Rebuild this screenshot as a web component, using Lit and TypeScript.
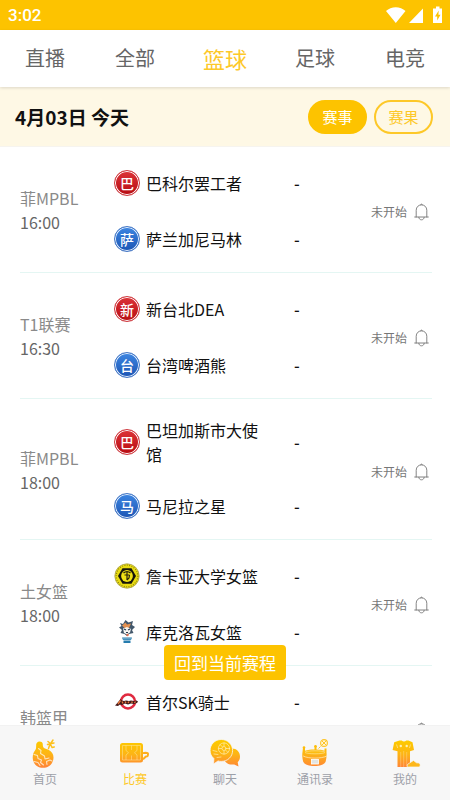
import { LitElement, html, svg, css, nothing } from "lit";
import { customElement, property, state } from "lit/decorators.js";
import { classMap } from "lit/directives/class-map.js";

type Badge = "red" | "blue" | "zhang" | "wolf" | "knights";

interface Team {
  name: string;
  badge: Badge;
}

interface Match {
  league: string;
  time?: string;
  home: Team;
  away?: Team;
}

const matches: Match[] = [
  { league: "菲MPBL", time: "16:00", home: { name: "巴科尔罢工者", badge: "red" }, away: { name: "萨兰加尼马林", badge: "blue" } },
  { league: "T1联赛", time: "16:30", home: { name: "新台北DEA", badge: "red" }, away: { name: "台湾啤酒熊", badge: "blue" } },
  { league: "菲MPBL", time: "18:00", home: { name: "巴坦加斯市大使馆", badge: "red" }, away: { name: "马尼拉之星", badge: "blue" } },
  { league: "土女篮", time: "18:00", home: { name: "詹卡亚大学女篮", badge: "zhang" }, away: { name: "库克洛瓦女篮", badge: "wolf" } },
  { league: "韩篮甲", home: { name: "首尔SK骑士", badge: "knights" } },
];

const gradient = (id: string) => svg`
  <linearGradient id=${id} x1="0" y1="0" x2="0" y2="30" gradientUnits="userSpaceOnUse">
    <stop offset="0.1" stop-color="#fdc800"></stop>
    <stop offset="0.5" stop-color="#fdb515"></stop>
    <stop offset="0.95" stop-color="#ff8438"></stop>
  </linearGradient>`;

const homeIcon = svg`
  <path fill="url(#g)" d="M9.500 2.500a3.400 3.400 0 0 1 3.300 3.700c.1 1.600.6 2.600 2.200 3.400l3.500 1.200c3.200 1.700 5 4.300 5 7.800 0 5.900-4.600 10.200-10.500 10.200S2.700 24.500 2.700 18.600c0-3.600 1.200-5.800 2.600-7.600 1-1.300.7-2.500.9-4.500a3.500 3.500 0 0 1 3.300-4z"></path>
  <path fill="none" stroke="#fff" stroke-opacity="0.7" stroke-width="1.100" stroke-linecap="round" stroke-linejoin="round" d="M8.500 9.500l2.500 2-.5 3 4 2.500.5 3 4-1 M4 15.500l3.500 1 .5 3 3.500 1.500-1 2.500 3 2.500 M4 22.500l4 1 2 3 M17 25.500l-.5-3 3.500-1.500 2 1"></path>
  <path fill="none" stroke="#fdc01c" stroke-width="1.500" stroke-linecap="round" stroke-linejoin="round" d="M18 2.500l1.800 1.500M23 1l-2 3M17.500 5.500l3-.8 3.500-.7M20 5l-1.500 4.500M20.800 6l1.200 2.500 2.300-.5"></path>`;

const matchIcon = svg`
  <rect x="0" y="4" width="23" height="19.500" rx="2.500" fill="url(#g)"></rect>
  <path fill="none" stroke="#fdae1c" stroke-width="2" stroke-linejoin="round" d="M23 15c0-1.600 5-1.600 5 0s0 2.500-1.800 2.500c-1.200 0-1.200 2-3.200 2.500"></path>
  <g fill="none" stroke="#fff0b8" stroke-opacity="0.55" stroke-width="0.800">
    <path d="M2.500 6.500h18v14.500h-18zM11.500 6.500v4.500M11.500 16.500V21M6 6.500v5l2.500 2.200L6 16v5M17 6.500v5l-2.500 2.200L17 16v5"></path>
  </g>`;

const chatIcon = svg`
  <path fill="url(#g)" d="M22 9.500c4.500 0 8 3.500 8 8 0 2.400-.8 4.200-2.300 5.700l.8 4.300-4.300-2.100c-6.200 1-10.700-2.400-10.700-7.900z"></path>
  <path fill="url(#g)" stroke="#f7f7f7" stroke-width="0.800" d="M11.300.5c6.300 0 11.300 4.800 11.300 10.900 0 6.300-5 11-11.200 11-1.200 0-2.300-.1-3.300-.5L3.600 25l.3-5.500C1.400 17.500.1 14.800.1 11.500.1 5.300 5 .5 11.300.5z"></path>
  <g fill="none" stroke="#fff0b8" stroke-opacity="0.750" stroke-width="0.900" stroke-linecap="round">
    <circle cx="14" cy="9.500" r="5.600"></circle>
    <circle cx="14" cy="9.500" r="2"></circle>
    <path d="M14 4v3M14 12v3M8.500 9.500h3M16.500 9.500h3M10.200 5.700l2 2M17.800 13.300l-2-2M3 11.500l4 1M4 15l4 .5M7 18.500l4-.5"></path>
  </g>`;

const contactsIcon = svg`
  <path fill="url(#g)" d="M3 8.500h2v3.200c2.600-.8 5.800-1.200 9.500-1.200V7.500h2v3c3.200.1 5.800.5 8 1.200V9.500h2v4c.3 2.500 0 6.500-1 9.500-1.500 2.600-5.800 4-11 4s-9.700-1.400-11.200-4c-1-3-1.300-7-.800-10z"></path>
  <ellipse cx="15" cy="13.300" rx="10" ry="1.500" fill="#fdbd10" stroke="#fff2c4" stroke-opacity="0.700" stroke-width="0.700"></ellipse>
  <path fill="none" stroke="#fff0c0" stroke-opacity="0.800" stroke-width="0.900" d="M3.200 17c5 2.800 18.600 2.800 23.600 0"></path>
  <rect x="11.500" y="20.500" width="7" height="4.500" fill="#e2e4e2" stroke="#fff" stroke-width="0.800"></rect>
  <circle cx="24" cy="4" r="3.400" fill="#fff6d8" stroke="#fdc428" stroke-width="1.100"></circle>
  <path fill="none" stroke="#fdc428" stroke-width="1" d="M22 2l4 4M26 2l-4 4M20.500 7.500l-2 2"></path>
  <circle cx="4" cy="8.500" r="1.300" fill="#fdbd08"></circle>
  <circle cx="15.500" cy="7.200" r="1.300" fill="#fdbd08"></circle>`;

const meIcon = svg`
  <path fill="url(#g)" d="M9.500 1.500h2.200c1.200 1.300 3.400 1.300 4.600 0h2.200l4 1.700 1.500 7.800-4 1.200V28H7.500V12.200l-4.900-1.200L4.200 3.200z"></path>
  <path fill="none" stroke="#fff3d0" stroke-opacity="0.450" stroke-width="0.700" d="M10.700 13v15M13.700 12v16M16.700 13v15"></path>
  <path fill="none" stroke="#fff3d0" stroke-opacity="0.800" stroke-width="0.700" d="M6.500 5.500L7.700 9M20.500 5.500L19.500 9"></path>
  <circle cx="10.800" cy="7" r="1.200" fill="#fff0b0"></circle>
  <circle cx="16.700" cy="7" r="1.200" fill="#fff0b0"></circle>
  <path fill="#fdb71c" stroke="#f7f7f7" stroke-width="0.700" d="M18 25l5.500-3.500 3 2.300 2.500.2c1.500 1 1.500 2.500.5 4H18.500c-1.500 0-1.800-1.800-.5-3z"></path>`;

@customElement("team-badge")
export class TeamBadge extends LitElement {
  @property() kind: Badge = "red";
  @property() letter = "";

  static styles = css`
    :host { display: block; flex: none; width: 26px; height: 26px; }
    .disc {
      box-sizing: border-box; width: 26px; height: 26px; border-radius: 50%;
      display: flex; align-items: center; justify-content: center;
      font: 500 14px/20px "Noto Sans CJK SC", sans-serif; color: #fff;
    }
    .red { border: 1px solid #cf3a40; background: linear-gradient(#dc3438, #b80c12); box-shadow: inset 0 0 0 1px #fff; }
    .blue { border: 1px solid #4577c4; background: linear-gradient(#3d86e2, #1c55b4); box-shadow: inset 0 0 0 1px #e8f2ff; }
    svg { display: block; width: 26px; height: 26px; }
  `;

  render() {
    switch (this.kind) {
      case "zhang":
        return html`<svg viewBox="0 0 26 26" aria-hidden="true">
          <circle cx="13" cy="13" r="12.200" fill="#e9dc12" stroke="#a79f5a" stroke-width="0.800"></circle>
          <circle cx="13" cy="13" r="10.800" fill="none" stroke="#857c10" stroke-width="1.200" stroke-dasharray="0.900 1.500"></circle>
          <path d="M8.500 5.200h9l4.500 7.800-4.500 7.800h-9L4 13z" fill="#17150a"></path>
          <circle cx="13" cy="13" r="5.900" fill="#f0e216"></circle>
          <path d="M9.500 10c2-2 5-2 7 0M10.500 12h5M13 9v8M15.500 12l-.5 3-2 2" fill="none" stroke="#28240a" stroke-width="1.200"></path>
        </svg>`;
      case "wolf":
        return html`<svg viewBox="0 0 26 26" aria-hidden="true">
          <path d="M6 4l3 1 2.500-4 3 2.500L19 2l-1 4 3 2-3 3 1.500 3-4.500 1-2 2-2.500-2-4-1L8 11 5 8.500 7.500 7z" fill="#42576b"></path>
          <path d="M8 6.500l3.500-3 1.500 2 4-1-2 4.500-4 .5z" fill="#e39152"></path>
          <path d="M9 9.500l4-1.500 4 2-1 3.500-3 2-3-1.500z" fill="#f5f5f2"></path>
          <path d="M10 10l2 1M16 10l-2 1M12 13.500h2" stroke="#22384c" stroke-width="1.200"></path>
          <circle cx="13.500" cy="16" r="1.200" fill="#dc6f50"></circle>
          <path d="M8 18.500h10l-1 2.500h-8zM9.500 21.500h7v2.500h-7z" fill="#267cae"></path>
          <path d="M10 19v1.500M12 19v1.500M14 19v1.500M16 19v1.500" stroke="#dbeef7" stroke-width="0.700"></path>
        </svg>`;
      case "knights":
        return html`<svg viewBox="0 0 26 26" aria-hidden="true">
          <circle cx="14" cy="12.500" r="7" fill="#fff" stroke="#e02a40" stroke-width="2.600"></circle>
          <path d="M2 15.500l3-3.500 1.500-2 1.500 1.500 2 .5 2-.5 3 .5 2-.5 3 .5 2.500-.5 1.500 1-1 1.500-3 1-3-.5-3 1-3-1-3 1.500-2-.5-2 1.500-3-.5z" fill="#45191a"></path>
          <path d="M4 15l2.500-3.500M8 12.500l1 2M11 12.500l1 1.500M15 12.500l-1 1.500M18 12.500v1.500M21.500 12.500l-1 1.500" stroke="#ee7a3c" stroke-width="1.300"></path>
        </svg>`;
      default:
        return html`<div class="disc ${this.kind}">${this.letter}</div>`;
    }
  }
}

@customElement("match-row")
export class MatchRow extends LitElement {
  @property({ attribute: false }) match!: Match;
  @state() private reminded = false;

  static styles = css`
    :host {
      display: flex; align-items: center; margin: 0 18px 0 20px; padding: 7px 0 6px;
      border-bottom: 1px solid #e4f6f3; font-size: 16px; line-height: 24px;
    }
    .when { flex: none; width: 94px; min-height: 48px; color: #666; }
    .league { color: #8a8a8a; }
    .teams { flex: 1; min-width: 0; min-height: 112px; }
    .team { display: flex; align-items: center; gap: 6px; box-sizing: border-box; min-height: 56px; padding: 12px 0 11px; color: #111; }
    .name { width: 118px; }
    .score { margin-left: 24px; font-weight: 500; }
    .remind {
      flex: none; display: flex; align-items: center; gap: 7px; margin: 0; padding: 4px 3px 0 0; border: 0;
      background: none; font: 12px/18px "Noto Sans CJK SC", sans-serif; color: #777; cursor: pointer;
    }
    .bell { width: 15px; height: 18px; }
    .on { color: #fdc300; }
  `;

  private team(t: Team) {
    return html`<div class="team">
      <team-badge .kind=${t.badge} .letter=${t.name[0]}></team-badge>
      <span class="name">${t.name}</span>
      <span class="score">-</span>
    </div>`;
  }

  render() {
    const m = this.match;
    return html`
      <div class="when"><div class="league">${m.league}</div>${m.time ? html`<time>${m.time}</time>` : nothing}</div>
      <div class="teams">${this.team(m.home)}${m.away ? this.team(m.away) : nothing}</div>
      <button class=${classMap({ remind: true, on: this.reminded })} aria-label="未开始" aria-pressed=${this.reminded ? "true" : "false"}
        @click=${() => (this.reminded = !this.reminded)}>
        ${m.time ? html`<span>未开始</span>` : nothing}
        <svg class="bell" viewBox="0 0 15 18" fill="none" stroke="currentColor" stroke-width="0.900" stroke-linecap="round" aria-hidden="true">
          <path d="M.7 14h13.600M2.200 14V7.300C2.200 4 4.500 1.900 7.500 1.900s5.300 2.100 5.300 5.400V14M6.600 1.700a1 1 0 0 1 1.800 0M4.800 14.300c.2 1.700 1.300 2.500 2.700 2.500s2.500-.8 2.700-2.500"></path>
        </svg>
      </button>`;
  }
}

@customElement("app-root")
export class AppRoot extends LitElement {
  @state() private tab = "篮球";
  @state() private mode = "赛事";

  static styles = css`
    :host {
      position: relative; display: flex; flex-direction: column; height: 100vh; overflow: hidden;
      background: #fff; font-family: "Noto Sans CJK SC", sans-serif;
    }
    button { font-family: inherit; cursor: pointer; }
    .status {
      flex: none; display: flex; align-items: center; justify-content: space-between; height: 30px;
      padding: 0 8px; background: #fdc300; color: #fff; font: 500 17px/30px Roboto, sans-serif;
    }
    .system { width: 56px; height: 18px; }
    .tabs { position: relative; flex: none; display: flex; height: 57px; box-shadow: 0 1px 3px #0002; background: #fff; }
    .tab { flex: 1; padding: 0 0 2px; border: 0; background: none; font-size: 20px; line-height: 30px; color: #666; }
    .tab.active { font-size: 22px; color: #fdc828; }
    .day { flex: none; display: flex; align-items: center; gap: 7px; height: 59px; padding: 0 17px 0 15px; background: #fef8e5; }
    .date { flex: 1; margin: 0; font-size: 19px; line-height: 28px; font-weight: 700; color: #111; }
    .pill { box-sizing: border-box; width: 59px; height: 34px; padding: 0; border: 2px solid #fdc828; border-radius: 17px; background: none; font-size: 15px; line-height: 20px; color: #fdc828; }
    .pill.active { border-color: #fdc300; background: #fdc300; color: #fff; }
    .list { flex: 1; min-height: 0; overflow: hidden; border-top: 1px solid #f6f4ef; }
    .bottom { position: relative; flex: none; display: flex; height: 74px; background: #f7f7f7; border-top: 1px solid #f2f2f2; }
    .link { flex: 1; display: flex; flex-direction: column; align-items: center; gap: 1px; padding-top: 13px; text-decoration: none; font-size: 12px; line-height: 18px; color: #9da0a8; }
    .link.active { color: #fdc828; }
    .icon { display: block; width: 30px; height: 30px; overflow: visible; }
    .back {
      position: absolute; bottom: calc(100% + 46px); left: 50%; transform: translateX(-50%); height: 35px; padding: 0 10px;
      border: 0; border-radius: 4px; background: #fdc300; color: #fff; font-size: 17px; line-height: 24px; white-space: nowrap;
    }
  `;

  private navLink(label: string, icon: unknown) {
    const active = label === "比赛";
    return html`<a class=${classMap({ link: true, active })} href="#" aria-current=${active ? "page" : nothing}>
      <svg class="icon" viewBox="0 0 30 30" aria-hidden="true"><defs>${gradient("g")}</defs>${icon}</svg>
      <span>${label}</span>
    </a>`;
  }

  render() {
    return html`
      <div class="status">
        <span>3:02</span>
        <svg class="system" viewBox="0 0 56 18" aria-hidden="true">
          <path fill="#fff" d="M0 5C5-.1 14.500-.1 19.500 5L9.800 17zM37 2.500V17H23zM50 .5h3.500v2H56V17h-9V2.500h3z"></path>
          <path fill="#fdc300" d="M52.700 4.500L49 10.500h2.200v4l3.300-5.700h-2.100z"></path>
        </svg>
      </div>
      <nav class="tabs">
        ${["直播", "全部", "篮球", "足球", "电竞"].map(
          (t) => html`<button class=${classMap({ tab: true, active: t === this.tab })} @click=${() => (this.tab = t)}>${t}</button>`
        )}
      </nav>
      <header class="day">
        <h1 class="date">4月03日 今天</h1>
        ${["赛事", "赛果"].map(
          (p) => html`<button class=${classMap({ pill: true, active: p === this.mode })} @click=${() => (this.mode = p)}>${p}</button>`
        )}
      </header>
      <main class="list">${matches.map((m) => html`<match-row .match=${m}></match-row>`)}</main>
      <nav class="bottom">
        <button class="back">回到当前赛程</button>
        ${this.navLink("首页", homeIcon)}
        ${this.navLink("比赛", matchIcon)}
        ${this.navLink("聊天", chatIcon)}
        ${this.navLink("通讯录", contactsIcon)}
        ${this.navLink("我的", meIcon)}
      </nav>`;
  }
}
